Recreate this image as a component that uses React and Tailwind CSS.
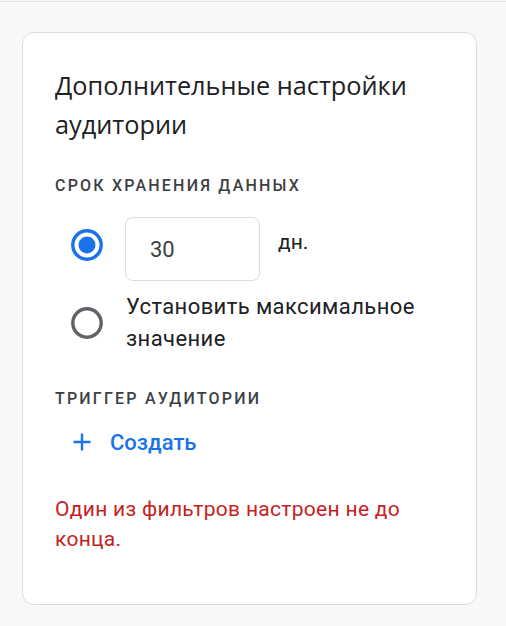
import React from "react";

function Radio({ checked }) {
  return (
    <svg width="32" height="32" viewBox="0 0 32 32" className="shrink-0">
      <circle
        cx="16"
        cy="16"
        r="14.2"
        fill="none"
        stroke={checked ? "#1a73e8" : "#5f6368"}
        strokeWidth="3.4"
      />
      {checked && <circle cx="16" cy="16" r="8.5" fill="#1a73e8" />}
    </svg>
  );
}

export default function App() {
  return (
    <div
      className="w-[506px] h-[626px] bg-[#f8f8f9] overflow-hidden"
      style={{ fontFamily: "Roboto, 'Liberation Sans', sans-serif" }}
    >
      <div className="mt-px h-px bg-[#e2e2e2]" />
      <div className="ml-[22px] mt-[30px] w-[455px] h-[573px] rounded-[12px] border border-[#dadce0] bg-white pl-[32px] pr-[20px] pt-[33px]">
        <h1
          className="text-[25.3px] leading-[39px] text-[#202124] font-normal"
          style={{ fontFamily: "'Open Sans', Roboto, sans-serif" }}
        >
          Дополнительные настройки аудитории
        </h1>

        <div className="mt-[32px] text-[16px] leading-[20px] tracking-[2.2px] font-medium text-[#3c4043]">
          СРОК ХРАНЕНИЯ ДАННЫХ
        </div>

        <div className="mt-[21px] flex items-start">
          <div className="ml-[16px] mt-[12px]">
            <Radio checked />
          </div>
          <div className="ml-[22px] w-[135px] h-[64px] rounded-[8px] border border-[#dadce0] flex items-center pl-[24px] text-[22px] text-[#3c4043]">
            30
          </div>
          <div className="ml-[18px] mt-[10px] text-[21px] leading-[30px] text-[#202124]">
            дн.
          </div>
        </div>

        <div className="mt-[10px] flex items-start">
          <div className="ml-[16px] mt-[16px]">
            <Radio />
          </div>
          <div className="ml-[23px] text-[22px] leading-[32px] tracking-[0.4px] text-[#202124] w-[320px]">
            Установить максимальное значение
          </div>
        </div>

        <div className="mt-[34px] text-[16px] leading-[20px] tracking-[2.2px] font-medium text-[#3c4043]">
          ТРИГГЕР АУДИТОРИИ
        </div>

        <div className="mt-[21px] flex items-center h-[24px] pl-[18px]">
          <svg width="18" height="18" viewBox="0 0 18 18" className="shrink-0">
            <path d="M9 0.5v17M0.5 9h17" stroke="#1a73e8" strokeWidth="2.4" fill="none" />
          </svg>
          <span className="ml-[19px] text-[22px] font-medium text-[#1a73e8]">Создать</span>
        </div>

        <div className="mt-[40px] text-[21px] leading-[30px] tracking-[0.3px] text-[#c5221f] w-[370px]">
          Один из фильтров настроен не до конца.
        </div>
      </div>
    </div>
  );
}
